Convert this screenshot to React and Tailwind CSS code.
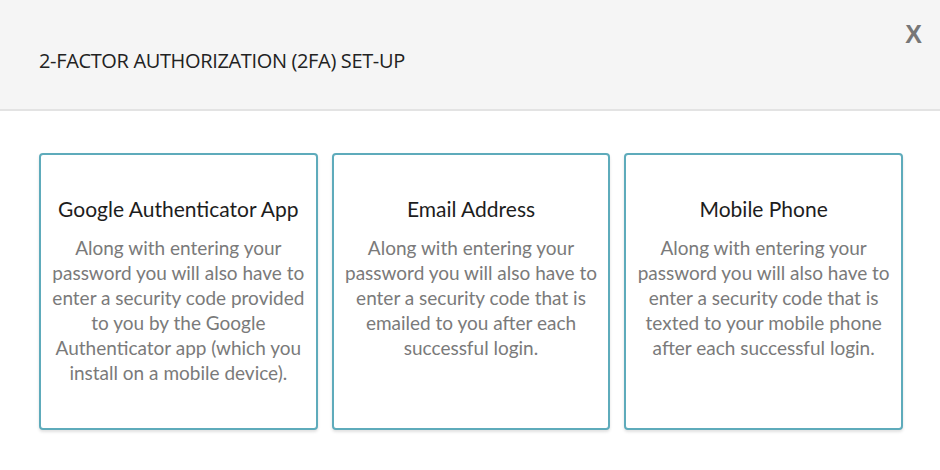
import React from 'react';

const options = [
  {
    title: 'Google Authenticator App',
    text: 'Along with entering your password you will also have to enter a security code provided to you by the Google Authenticator app (which you install on a mobile device).',
  },
  {
    title: 'Email Address',
    text: 'Along with entering your password you will also have to enter a security code that is emailed to you after each successful login.',
  },
  {
    title: 'Mobile Phone',
    text: 'Along with entering your password you will also have to enter a security code that is texted to your mobile phone after each successful login.',
  },
];

const OptionCard = ({ title, text }) => (
  <button className="flex h-[277px] flex-col items-center justify-start rounded-[4px] border-2 border-[#5eabbb] bg-white px-[8px] pt-[41px] text-center shadow-[0_2px_3px_rgba(0,0,0,0.12)]">
    <h3 className="text-[21px] leading-[26px] text-[#1d1d1d]">{title}</h3>
    <p className="mt-[13px] text-[19px] leading-[25px] text-[#7a7a7a]">{text}</p>
  </button>
);

const App = () => {
  return (
    <div className="h-[470px] w-[940px] bg-white font-['Lato',sans-serif]">
      <header className="relative h-[111px] border-b-2 border-[#e3e3e3] bg-[#f5f5f5] pl-[39px] pt-[48px]">
        <h2 className="font-['Open_Sans',sans-serif] text-[20px] leading-[26px] tracking-[-0.35px] text-[#222]">
          2-FACTOR AUTHORIZATION (2FA) SET-UP
        </h2>
        <button className="absolute right-[18px] top-[19px] font-['Liberation_Sans',sans-serif] text-[25px] font-bold leading-[30px] text-[#777]">
          X
        </button>
      </header>
      <main className="grid grid-cols-3 gap-[14px] pl-[39px] pr-[37px] pt-[42px]">
        {options.map((o) => (
          <OptionCard key={o.title} {...o} />
        ))}
      </main>
    </div>
  );
};

export default App;
